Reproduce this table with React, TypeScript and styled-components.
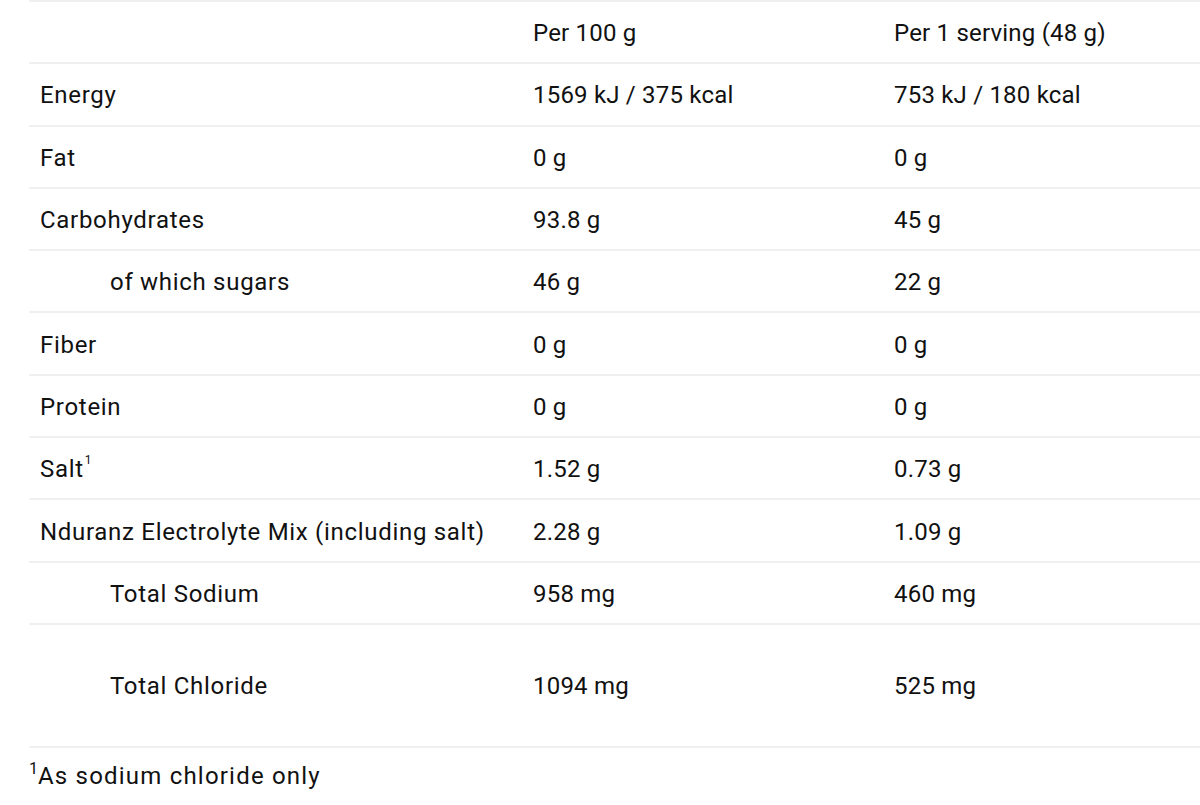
import React from "react";
import styled, { createGlobalStyle } from "styled-components";

const Global = createGlobalStyle`
  html, body { margin: 0; padding: 0; background: #fff; }
  body { font-family: Roboto, "Liberation Sans", Arial, sans-serif; color: #111; }
`;

const Page = styled.div`
  padding: 0 0 0 29px;
  overflow: hidden;
  width: 1200px;
  box-sizing: border-box;
`;

const Table = styled.table`
  width: 1171px;
  border-collapse: collapse;
  border-top: 2px solid #f0f0f0;
  table-layout: fixed;
  font-size: 24px;
  letter-spacing: 0.2px;
`;

const Row = styled.tr<{ $tall?: boolean }>`
  height: ${(p) => (p.$tall ? "123px" : "62.3px")};
`;

const Cell = styled.td<{ $indent?: boolean; $w?: number; $label?: boolean }>`
  border-bottom: 2px solid #f0f0f0;
  padding: 2px 0 0 ${(p) => (p.$indent ? 81 : 11)}px;
  vertical-align: middle;
  white-space: nowrap;
  ${(p) => (p.$label ? "letter-spacing: 0.7px;" : "")}
  ${(p) => (p.$w ? `width: ${p.$w}px;` : "")}
`;

const Sup = styled.sup<{ $big?: boolean }>`
  font-size: ${(p) => (p.$big ? 16 : 12)}px;
  vertical-align: top;
  position: relative;
  top: ${(p) => (p.$big ? -3 : -2)}px;
  margin-left: ${(p) => (p.$big ? 0 : 1)}px;
  letter-spacing: 0;
`;

const Footnote = styled.p`
  margin: 14px 0 0;
  font-size: 24px;
  letter-spacing: 1.2px;
`;

type R = { label: string; a: string; b: string; indent?: boolean; sup?: boolean; tall?: boolean };

const rows: R[] = [
  { label: "Energy", a: "1569 kJ / 375 kcal", b: "753 kJ / 180 kcal" },
  { label: "Fat", a: "0 g", b: "0 g" },
  { label: "Carbohydrates", a: "93.8 g", b: "45 g" },
  { label: "of which sugars", a: "46 g", b: "22 g", indent: true },
  { label: "Fiber", a: "0 g", b: "0 g" },
  { label: "Protein", a: "0 g", b: "0 g" },
  { label: "Salt", a: "1.52 g", b: "0.73 g", sup: true },
  { label: "Nduranz Electrolyte Mix (including salt)", a: "2.28 g", b: "1.09 g" },
  { label: "Total Sodium", a: "958 mg", b: "460 mg", indent: true },
  { label: "Total Chloride", a: "1094 mg", b: "525 mg", indent: true, tall: true },
];

export default function App() {
  return (
    <Page>
      <Global />
      <Table>
        <tbody>
          <Row>
            <Cell $w={482} $label></Cell>
            <Cell $w={350}>Per 100 g</Cell>
            <Cell>Per 1 serving (48 g)</Cell>
          </Row>
          {rows.map((r) => (
            <Row key={r.label} $tall={r.tall}>
              <Cell $indent={r.indent} $label>
                {r.label}
                {r.sup && <Sup>1</Sup>}
              </Cell>
              <Cell>{r.a}</Cell>
              <Cell>{r.b}</Cell>
            </Row>
          ))}
        </tbody>
      </Table>
      <Footnote>
        <Sup $big>1</Sup>As sodium chloride only
      </Footnote>
    </Page>
  );
}
